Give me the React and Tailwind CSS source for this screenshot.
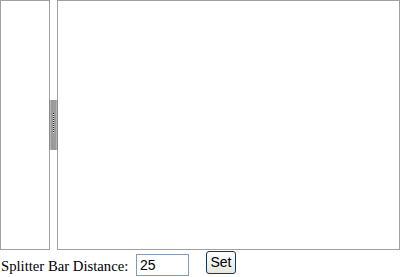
import React from "react";

export default function App() {
  const dots = Array.from({ length: 10 });
  return (
    <div className="w-[401px] h-[277px] bg-white overflow-hidden" style={{ fontFamily: '"Liberation Serif", serif' }}>
      <div className="flex h-[250px]">
        <div className="w-[50px] h-full border border-[#a0a0a0] bg-white" />
        <div className="w-[7px] h-full flex flex-col justify-center items-center">
          <div className="relative w-[9px] h-[50px] -mx-px bg-[#9c9c9c] border-x border-x-[#8c8c8c] flex flex-col items-center pt-[13px] shrink-0">
            <div className="absolute inset-y-0 left-0 w-px bg-[#b4b4b4]" />
            <div className="absolute inset-y-0 right-0 w-px bg-[#b4b4b4]" />
            {dots.map((_, i) => (
              <div key={i} className="flex flex-col">
                <div className="w-px h-px bg-[#222222]" />
                <div className="w-px h-px bg-[#e8e8e8]" />
              </div>
            ))}
          </div>
        </div>
        <div className="w-[343px] h-full border border-[#a0a0a0] bg-white" />
      </div>
      <div className="flex items-start h-[27px]">
        <span className="ml-px w-[135px] mt-[8px] text-[14.7px] leading-[17px] text-black whitespace-nowrap">Splitter Bar Distance:</span>
        <input
          readOnly
          value="25"
          className="mt-[4px] w-[53px] h-[22px] border border-[#7f9db9] px-[3px] text-[14px] text-black outline-none"
          style={{ fontFamily: '"Liberation Sans", sans-serif' }}
        />
        <button
          className="ml-[17px] mt-px w-[30px] h-[23px] border border-[#003c74] rounded-[3px] bg-gradient-to-b from-white to-[#e6e5df] text-[14px] leading-none text-black flex items-center justify-center pb-px"
          style={{ fontFamily: '"Liberation Sans", sans-serif' }}
        >
          Set
        </button>
      </div>
    </div>
  );
}
